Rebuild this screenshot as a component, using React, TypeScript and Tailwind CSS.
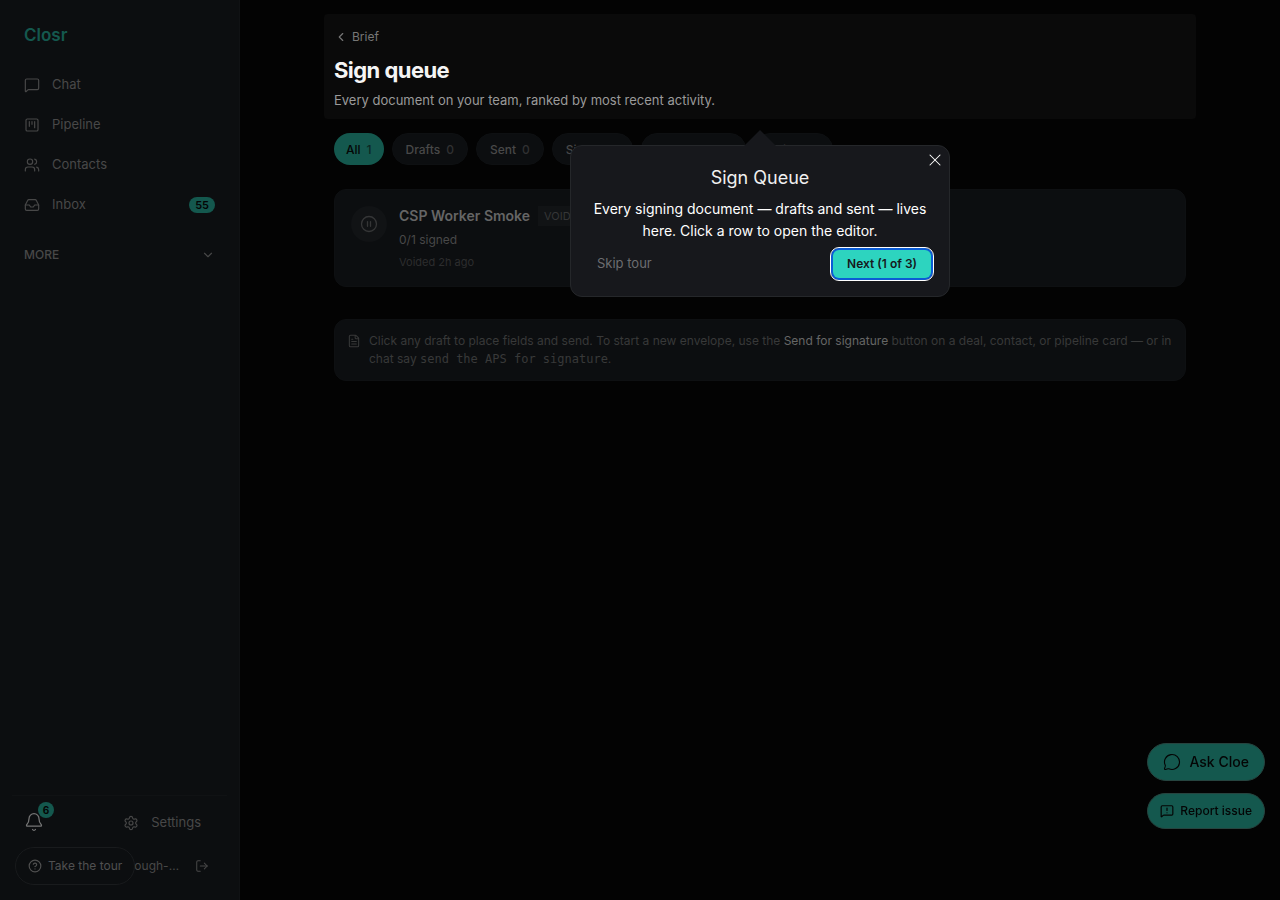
import {
  Bell,
  ChevronDown,
  ChevronLeft,
  CircleHelp,
  CirclePause,
  FileText,
  Inbox,
  LogOut,
  MessageCircle,
  MessageSquare,
  MessageSquareWarning,
  Settings,
  SquareKanban,
  Users,
  X,
} from "lucide-react";

const navItems = [
  { label: "Chat", icon: MessageSquare },
  { label: "Pipeline", icon: SquareKanban },
  { label: "Contacts", icon: Users },
  { label: "Inbox", icon: Inbox, badge: 55 },
];

const filters = [
  { label: "All", count: 1, active: true },
  { label: "Drafts", count: 0 },
  { label: "Sent", count: 0 },
  { label: "Signed", count: 0 },
  { label: "Completed", count: 0 },
  { label: "Voided", count: 1 },
];

function Sidebar() {
  return (
    <aside className="sticky top-0 flex h-screen w-60 shrink-0 flex-col border-r border-[#101214] bg-[#0c0e10] text-[#484848]">
      <a href="#" className="mt-[25px] px-6 text-[17px] leading-5 font-semibold text-[#14584e]">
        Closr
      </a>

      <nav className="mt-5 flex flex-col px-3">
        {navItems.map(({ label, icon: Icon, badge }) => (
          <a key={label} href="#" className="flex h-10 items-center gap-3 px-3 text-[13px]">
            <Icon size={16} strokeWidth={1.75} />
            <span>{label}</span>
            {badge && (
              <span className="ml-auto flex h-4 items-center rounded-full bg-[#14584e] px-1.5 text-[11px] font-semibold text-[#040505]">
                {badge}
              </span>
            )}
          </a>
        ))}
      </nav>

      <button className="mt-5 flex h-5 items-center justify-between px-6 text-xs font-medium">
        MORE
        <ChevronDown size={14} strokeWidth={2} />
      </button>

      <div className="mx-3 mt-auto border-t border-[#101214] pt-0.5 pb-3.5">
        <div className="flex h-12 items-center">
          <button aria-label="Notifications" className="relative ml-3 text-[#757575]">
            <Bell size={20} strokeWidth={1.5} />
            <span className="absolute -top-2.5 left-3.5 flex size-4 items-center justify-center rounded-full bg-[#14584e] text-[10px] font-bold text-[#040505]">
              6
            </span>
          </button>
          <a href="#" className="ml-auto flex items-center gap-3 pt-0.5 pr-6.5 text-[13px]">
            <Settings size={16} strokeWidth={1.75} />
            Settings
          </a>
        </div>
        <div className="flex h-10 items-center justify-end gap-4 pr-4.5 text-xs">
          <span>ough-…</span>
          <button aria-label="Log out">
            <LogOut size={14} strokeWidth={1.75} />
          </button>
        </div>
      </div>
    </aside>
  );
}

function TourPopover() {
  return (
    <div
      role="dialog"
      aria-labelledby="tour-title"
      className="absolute top-full left-1/2 z-10 mt-6.5 w-[380px] -translate-x-1/2 rounded-xl border border-[#25272a] bg-[#17181c] px-4 pt-5 pb-4 text-center text-white"
    >
      <svg className="absolute -top-4 left-1/2 -translate-x-1/2" width="32" height="16" viewBox="0 0 32 16">
        <path d="M0 16 16 0l16 16z" fill="#17181c" />
      </svg>
      <button aria-label="Close" className="absolute top-0 right-0 p-1">
        <X size={20} strokeWidth={1.25} />
      </button>
      <h2 id="tour-title" className="text-lg leading-6 text-[#f0f0f0]">
        Sign Queue
      </h2>
      <p className="mt-2 text-sm leading-[22px]">
        Every signing document — drafts and sent — lives here. Click a row to open the editor.
      </p>
      <div className="mt-1.5 flex items-center justify-between pl-2.5">
        <button className="text-[13px] text-[#6c6d70]">Skip tour</button>
        <button className="m-0.5 h-7 rounded-md bg-[#2dd4bf] px-3.5 text-xs font-semibold text-[#17181c] ring-2 ring-[#0b5cd5] outline-1 outline-offset-2 outline-white">
          Next (1 of 3)
        </button>
      </div>
    </div>
  );
}

function DocumentRow() {
  return (
    <a href="#" className="mt-6 flex gap-3 rounded-xl border border-[#0e1012] bg-[#0c0e10] p-4">
      <span className="flex size-9 shrink-0 items-center justify-center rounded-full bg-[#111315] text-[#353637]">
        <CirclePause size={18} strokeWidth={1.75} />
      </span>
      <div>
        <div className="flex items-center gap-2">
          <h2 className="text-sm leading-5 font-semibold text-[#656565]">CSP Worker Smoke</h2>
          <span className="bg-[#111315] px-1.5 text-[11px] leading-5 text-[#353637]">VOIDED</span>
        </div>
        <p className="mt-1 text-xs leading-5 text-[#484848]">0/1 signed</p>
        <p className="mt-1 text-[11px] leading-4 text-[#2c2d2e]">Voided 2h ago</p>
      </div>
    </a>
  );
}

export default function App() {
  return (
    <div className="flex min-h-screen bg-[#030303] font-['Inter',sans-serif]">
      <Sidebar />

      <main className="flex-1 px-5 pt-3.5">
        <div className="mx-auto max-w-[872px]">
          <header className="relative rounded-sm bg-[#0a0a0a] px-2.5 pt-[13px] pb-[9px]">
            <a href="#" className="flex items-center gap-1 text-xs leading-5 text-[#767676]">
              <ChevronLeft size={14} />
              Brief
            </a>
            <h1 className="mt-[7px] text-[22px] leading-8 font-bold tracking-tight text-[#f5f5f5]">Sign queue</h1>
            <p className="mt-1 text-[13px] leading-5 text-[#9a9a9a]">
              Every document on your team, ranked by most recent activity.
            </p>
            <TourPopover />
          </header>

          <div className="px-2.5">
            <div className="mt-3.5 flex flex-wrap gap-2">
              {filters.map(({ label, count, active }) => (
                <button
                  key={label}
                  className={
                    active
                      ? "flex h-8 items-center gap-1.5 rounded-full bg-[#14584e] px-3 pt-0.5 text-xs font-medium text-[#040505]"
                      : "flex h-8 items-center gap-1.5 rounded-full border border-[#0e1012] bg-[#0c0e10] px-[13px] pt-0.5 text-xs font-medium text-[#484848]"
                  }
                >
                  {label}
                  <span className="opacity-60">{count}</span>
                </button>
              ))}
            </div>

            <DocumentRow />

            <div className="mt-8 flex gap-2 rounded-xl border border-[#0e1012] bg-[#0c0e10] p-3 text-xs leading-[18px] text-[#383939]">
              <FileText size={14} strokeWidth={1.75} className="mt-0.5 shrink-0" />
              <p>
                Click any draft to place fields and send. To start a new envelope, use the{" "}
                <span className="text-[#666666]">Send for signature</span> button on a deal, contact, or pipeline card
                — or in chat say{" "}
                <code className="font-['DejaVu_Sans_Mono',monospace]">send the APS for signature</code>.
              </p>
            </div>
          </div>
        </div>
      </main>

      <button className="fixed bottom-[15px] left-[15px] flex h-[38px] items-center gap-1.5 rounded-full border border-[#191b1d] bg-[#0c0e10] px-3 text-xs text-[#505050]">
        <CircleHelp size={14} />
        Take the tour
      </button>

      <div className="fixed right-[15px] bottom-[71px] flex flex-col gap-3 text-[#040505]">
        <button className="flex h-[38px] items-center justify-center gap-2 rounded-full border border-[#26443f] bg-[#14584e] text-sm font-medium">
          <MessageCircle size={18} strokeWidth={1.5} />
          Ask Cloe
        </button>
        <button className="flex h-9 items-center gap-1.5 rounded-full border border-[#26443f] bg-[#14584e] px-3 text-xs font-medium">
          <MessageSquareWarning size={14} />
          Report issue
        </button>
      </div>
    </div>
  );
}
